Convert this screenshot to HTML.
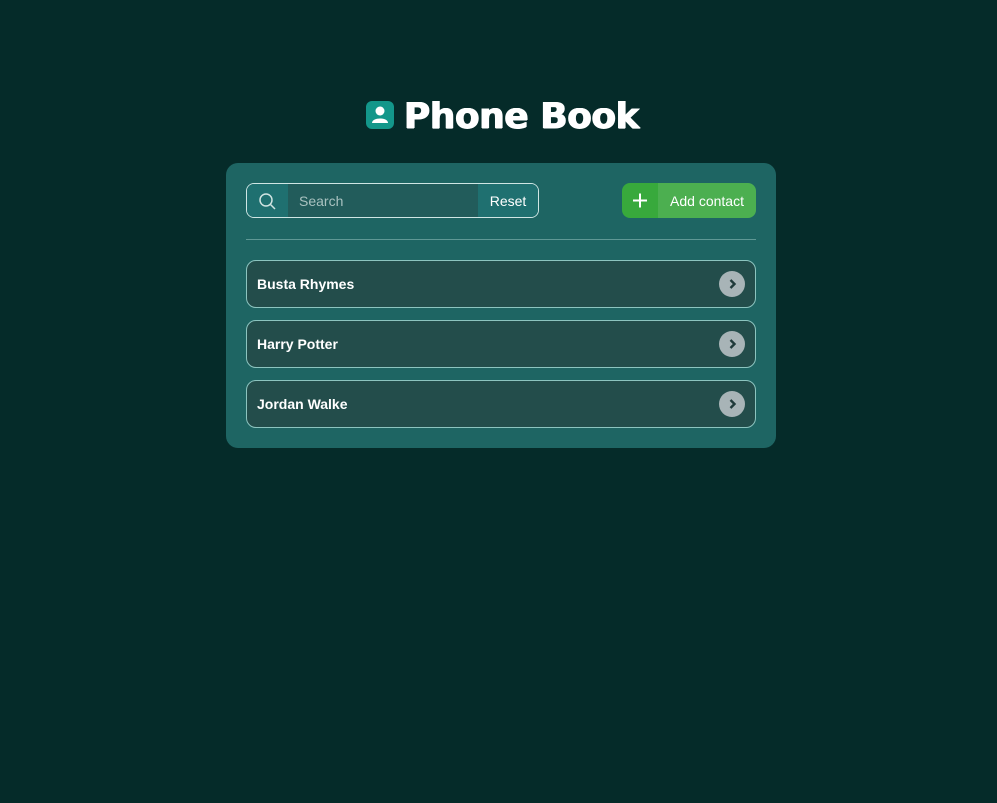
<!DOCTYPE html>
<html><head><style>
body{margin:0;width:997px;height:803px;background:#052b29;font-family:"Liberation Sans",Arial,sans-serif;position:relative;overflow:hidden}
.title{position:absolute;top:96px;left:4px;width:997px;text-align:center;color:#fff;font:bold 36px "DejaVu Sans",sans-serif;letter-spacing:-0.5px;text-shadow:0.6px 0 #fff,-0.6px 0 #fff,0 0.6px #fff}
.title .ic{display:inline-block;width:28px;height:28px;background:#13978a;border-radius:6px;vertical-align:-1px;margin-right:10px;position:relative}
.title svg{display:block}
.card{position:absolute;left:226px;top:163px;width:550px;height:285px;background:#1e6563;border-radius:12px}
.search{position:absolute;left:20px;top:20px;width:291px;height:33px;border:1px solid #cfe6e4;border-radius:8px;overflow:hidden;display:flex}
.search .s1{width:41px;background:#1f7070;position:relative}
.search .s1 svg{display:block}
.search .s2{flex:1;background:#225c5b;color:#a9c2c0;font-size:14px;line-height:34px;padding-left:11px}
.search .s3{width:60px;background:#1f7070;color:#fff;font-size:14px;line-height:34px;text-align:center}
.add{position:absolute;left:396px;top:20px;width:134px;height:35px;border-radius:8px;overflow:hidden;display:flex}
.add .p{width:36px;background:#38a93c}
.add .p svg{display:block}
.add .t{flex:1;background:#4caf50;color:#fff;font-size:14px;line-height:36px;text-align:center}
.hr{position:absolute;left:20px;top:76px;width:510px;height:1px;background:#5f9895}
.row{position:absolute;left:20px;width:508px;height:46px;border:1px solid #8cc4bf;border-radius:10px;background:#234d4b;color:#fff;font-weight:bold;font-size:14px;line-height:46px}
.row span{padding-left:10px}
.row .c{position:absolute;right:10px;top:10px;width:26px;height:26px;border-radius:50%;background:#a8b4b7}
.row .c svg{display:block}
</style></head><body>
<div class="title"><span class="ic"><svg width="28" height="28" viewBox="0 0 28 28"><circle cx="14" cy="10" r="4.5" fill="#fff"/><path d="M6 22 C6 16 22 16 22 22 Z" fill="#fff"/></svg></span>Phone Book</div>
<div class="card">
<div class="search"><div class="s1"><svg width="41" height="33" viewBox="0 0 41 33"><circle cx="19" cy="16" r="6" fill="none" stroke="#cfe3e1" stroke-width="1.5"/><path d="M23.5 20.5 L28 25" stroke="#cfe3e1" stroke-width="1.5"/></svg></div><div class="s2">Search</div><div class="s3">Reset</div></div>
<div class="add"><div class="p"><svg width="36" height="35"><path d="M18 10.5 V24.5 M11 17.5 H25" stroke="#fff" stroke-width="2"/></svg></div><div class="t">Add contact</div></div>
<div class="hr"></div>
<div class="row" style="top:97px"><span>Busta Rhymes</span><div class="c"><svg width="26" height="26"><path d="M11.5 9 L15.5 13 L11.5 17" fill="none" stroke="#1f3a3a" stroke-width="2.4"/></svg></div></div>
<div class="row" style="top:157px"><span>Harry Potter</span><div class="c"><svg width="26" height="26"><path d="M11.5 9 L15.5 13 L11.5 17" fill="none" stroke="#1f3a3a" stroke-width="2.4"/></svg></div></div>
<div class="row" style="top:217px"><span>Jordan Walke</span><div class="c"><svg width="26" height="26"><path d="M11.5 9 L15.5 13 L11.5 17" fill="none" stroke="#1f3a3a" stroke-width="2.4"/></svg></div></div>
</div>
</body></html>
